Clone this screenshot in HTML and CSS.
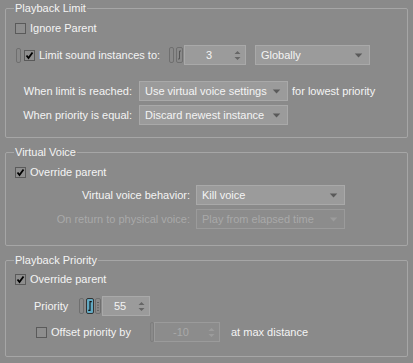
FILE: index.html
```html
<!DOCTYPE html>
<html lang="en">
<head>
    <meta charset="UTF-8">
    <title>Playback Settings</title>
    <link rel="stylesheet" href="styles.css">
</head>
<body>
    <fieldset class="group group-limit">
        <legend>Playback Limit</legend>
        <div class="row row-check first">
            <span class="checkbox"></span>
            <span>Ignore Parent</span>
        </div>
        <div class="row row-ctrl row-limit">
            <span class="pill link"></span>
            <span class="checkbox checked"><svg viewBox="0 0 9 9"><path d="M1.5 4.5 L3.5 7 L7.5 1.5" /></svg></span>
            <span class="limit-text">Limit sound instances to:</span>
            <span class="pill"></span>
            <span class="pill wide"><svg viewBox="0 0 5 14"><path d="M1 11 H2.5 V3 H4" /></svg></span>
            <div class="spinbox spin-count">3<svg class="spin" viewBox="0 0 7 11"><path d="M3.5 1 L6.5 4 H0.5 Z M3.5 10 L6.5 7 H0.5 Z" /></svg></div>
            <div class="dropdown drop-scope">Globally<svg class="arrow" viewBox="0 0 10 6"><path d="M0.5 0.5 H9.5 L5 5.5 Z" /></svg></div>
        </div>
        <div class="row row-ctrl row-reached">
            <span class="field-label">When limit is reached:</span>
            <div class="dropdown drop-wide">Use virtual voice settings<svg class="arrow" viewBox="0 0 10 6"><path d="M0.5 0.5 H9.5 L5 5.5 Z" /></svg></div>
            <span class="suffix">for lowest priority</span>
        </div>
        <div class="row row-ctrl row-equal">
            <span class="field-label">When priority is equal:</span>
            <div class="dropdown drop-wide">Discard newest instance<svg class="arrow" viewBox="0 0 10 6"><path d="M0.5 0.5 H9.5 L5 5.5 Z" /></svg></div>
        </div>
    </fieldset>

    <fieldset class="group group-virtual">
        <legend>Virtual Voice</legend>
        <div class="row row-check first">
            <span class="checkbox checked"><svg viewBox="0 0 9 9"><path d="M1.5 4.5 L3.5 7 L7.5 1.5" /></svg></span>
            <span>Override parent</span>
        </div>
        <div class="row row-ctrl row-behavior">
            <span class="field-label long">Virtual voice behavior:</span>
            <div class="dropdown drop-wide">Kill voice<svg class="arrow" viewBox="0 0 10 6"><path d="M0.5 0.5 H9.5 L5 5.5 Z" /></svg></div>
        </div>
        <div class="row row-ctrl row-return disabled">
            <span class="field-label long">On return to physical voice:</span>
            <div class="dropdown drop-wide">Play from elapsed time<svg class="arrow" viewBox="0 0 10 6"><path d="M0.5 0.5 H9.5 L5 5.5 Z" /></svg></div>
        </div>
    </fieldset>

    <fieldset class="group group-priority">
        <legend>Playback Priority</legend>
        <div class="row row-check first">
            <span class="checkbox checked"><svg viewBox="0 0 9 9"><path d="M1.5 4.5 L3.5 7 L7.5 1.5" /></svg></span>
            <span>Override parent</span>
        </div>
        <div class="row row-ctrl row-priority">
            <span class="priority-label">Priority</span>
            <span class="pill"></span>
            <span class="pill wide active"><svg viewBox="0 0 6 16"><path d="M1 13 H3 V3 H5" /></svg></span>
            <span class="pill dotted"><svg viewBox="0 0 4 16"><path d="M1 4 H3 M1 7 H3 M1 10 H3 M1 13 H3" /></svg></span>
            <div class="spinbox spin-priority">55<svg class="spin" viewBox="0 0 7 11"><path d="M3.5 1 L6.5 4 H0.5 Z M3.5 10 L6.5 7 H0.5 Z" /></svg></div>
        </div>
        <div class="row row-ctrl row-offset">
            <span class="checkbox"></span>
            <span class="offset-text">Offset priority by</span>
            <span class="pill thin"></span>
            <div class="spinbox spin-offset disabled">-10<svg class="spin" viewBox="0 0 7 11"><path d="M3.5 1 L6.5 4 H0.5 Z M3.5 10 L6.5 7 H0.5 Z" /></svg></div>
            <span class="suffix">at max distance</span>
        </div>
    </fieldset>
</body>
</html>
```

FILE: styles.css
```css
body {
    margin: 0;
    padding: 1px 0 0;
    width: 413px;
    height: 362px;
    overflow: hidden;
    background-color: #8a8a8a;
    font-family: "Liberation Sans", Arial, sans-serif;
    font-size: 11px;
    color: #f4f4f4;
}

.group {
    min-width: 0;
    margin: 0 5px 7px;
    padding: 0 9px 12px;
    border: 1px solid #a6a6a6;
    border-radius: 2px;
}

.group legend {
    padding: 0 1px;
    margin-left: -1px;
    line-height: 14px;
}

.group-virtual {
    padding-bottom: 16px;
}

.group-priority {
    padding-bottom: 14px;
}

.row {
    display: flex;
    align-items: center;
    white-space: nowrap;
}

.row-check {
    height: 14px;
    margin-top: 6px;
}

.group-priority .row-check {
    margin-top: 5px;
}

.row-ctrl {
    height: 20px;
}

.row-limit {
    margin-top: 10px;
}

.row-reached {
    margin-top: 16px;
}

.row-equal {
    margin-top: 4px;
}

.row-behavior {
    margin-top: 6px;
}

.row-return {
    margin-top: 4px;
}

.row-priority {
    margin-top: 10px;
    padding-left: 19px;
}

.row-offset {
    margin-top: 6px;
    padding-left: 21px;
}

/* checkbox */
.checkbox {
    flex: none;
    width: 11px;
    height: 11px;
    box-sizing: border-box;
    border: 1px solid #5a5a5a;
    background-color: #8e8e8e;
    margin-right: 4px;
    display: flex;
    align-items: center;
    justify-content: center;
}

.checkbox svg {
    width: 9px;
    height: 9px;
    fill: none;
    stroke: #000;
    stroke-width: 1.8;
}

/* small link / rtpc markers */
.pill {
    flex: none;
    width: 5px;
    height: 16px;
    box-sizing: border-box;
    border: 1px solid #6f6f6f;
    border-radius: 2px;
    margin-right: 2px;
    display: flex;
}

.pill.link {
    margin-left: 1px;
    margin-right: 3px;
    width: 5px;
    height: 15px;
}

.pill.wide {
    width: 7px;
    margin-right: 1px;
}

.pill svg {
    width: 100%;
    height: 100%;
    fill: none;
    stroke: #555;
    stroke-width: 1;
}

.pill.active {
    width: 8px;
    border-color: #333;
    background-color: #62a9c2;
    margin-right: 1px;
}

.pill.active svg {
    stroke: #111;
    stroke-width: 1.3;
}

.pill.dotted {
    width: 6px;
    margin-right: 1px;
}

.pill.thin {
    width: 4px;
    height: 20px;
    margin-right: 0;
    border-color: #7e7e7e;
}

.limit-text {
    width: 130px;
}

.field-label {
    width: 117px;
    text-align: right;
    margin-right: 7px;
}

.field-label.long {
    width: 175px;
    margin-right: 6px;
}

.priority-label {
    width: 45px;
}

.offset-text {
    width: 99px;
}

.suffix {
    margin-left: 4px;
}

.row-offset .suffix {
    margin-left: 11px;
}

/* inputs */
.spinbox,
.dropdown {
    position: relative;
    flex: none;
    height: 20px;
    box-sizing: border-box;
    border: 1px solid #a9a9a9;
    background-color: #9b9b9b;
    line-height: 18px;
}

.spinbox {
    text-align: center;
    padding-right: 12px;
}

.spin-count {
    width: 62px;
    margin-right: 9px;
}

.spin-priority {
    width: 48px;
}

.spin-offset {
    width: 66px;
}

.spin {
    position: absolute;
    right: 4px;
    top: 4px;
    width: 7px;
    height: 11px;
    fill: #666;
}

.dropdown {
    padding-left: 5px;
}

.drop-scope {
    width: 115px;
}

.drop-wide {
    width: 149px;
}

.arrow {
    position: absolute;
    right: 6px;
    top: 7px;
    width: 9px;
    height: 5px;
    fill: #5a5a5a;
}

/* disabled state */
.disabled,
.disabled .dropdown {
    color: #a9a9a9;
}

.disabled .dropdown,
.spinbox.disabled {
    background-color: #8c8c8c;
    border-color: #9b9b9b;
}

.disabled .arrow,
.disabled .spin {
    fill: #9c9c9c;
}
```
